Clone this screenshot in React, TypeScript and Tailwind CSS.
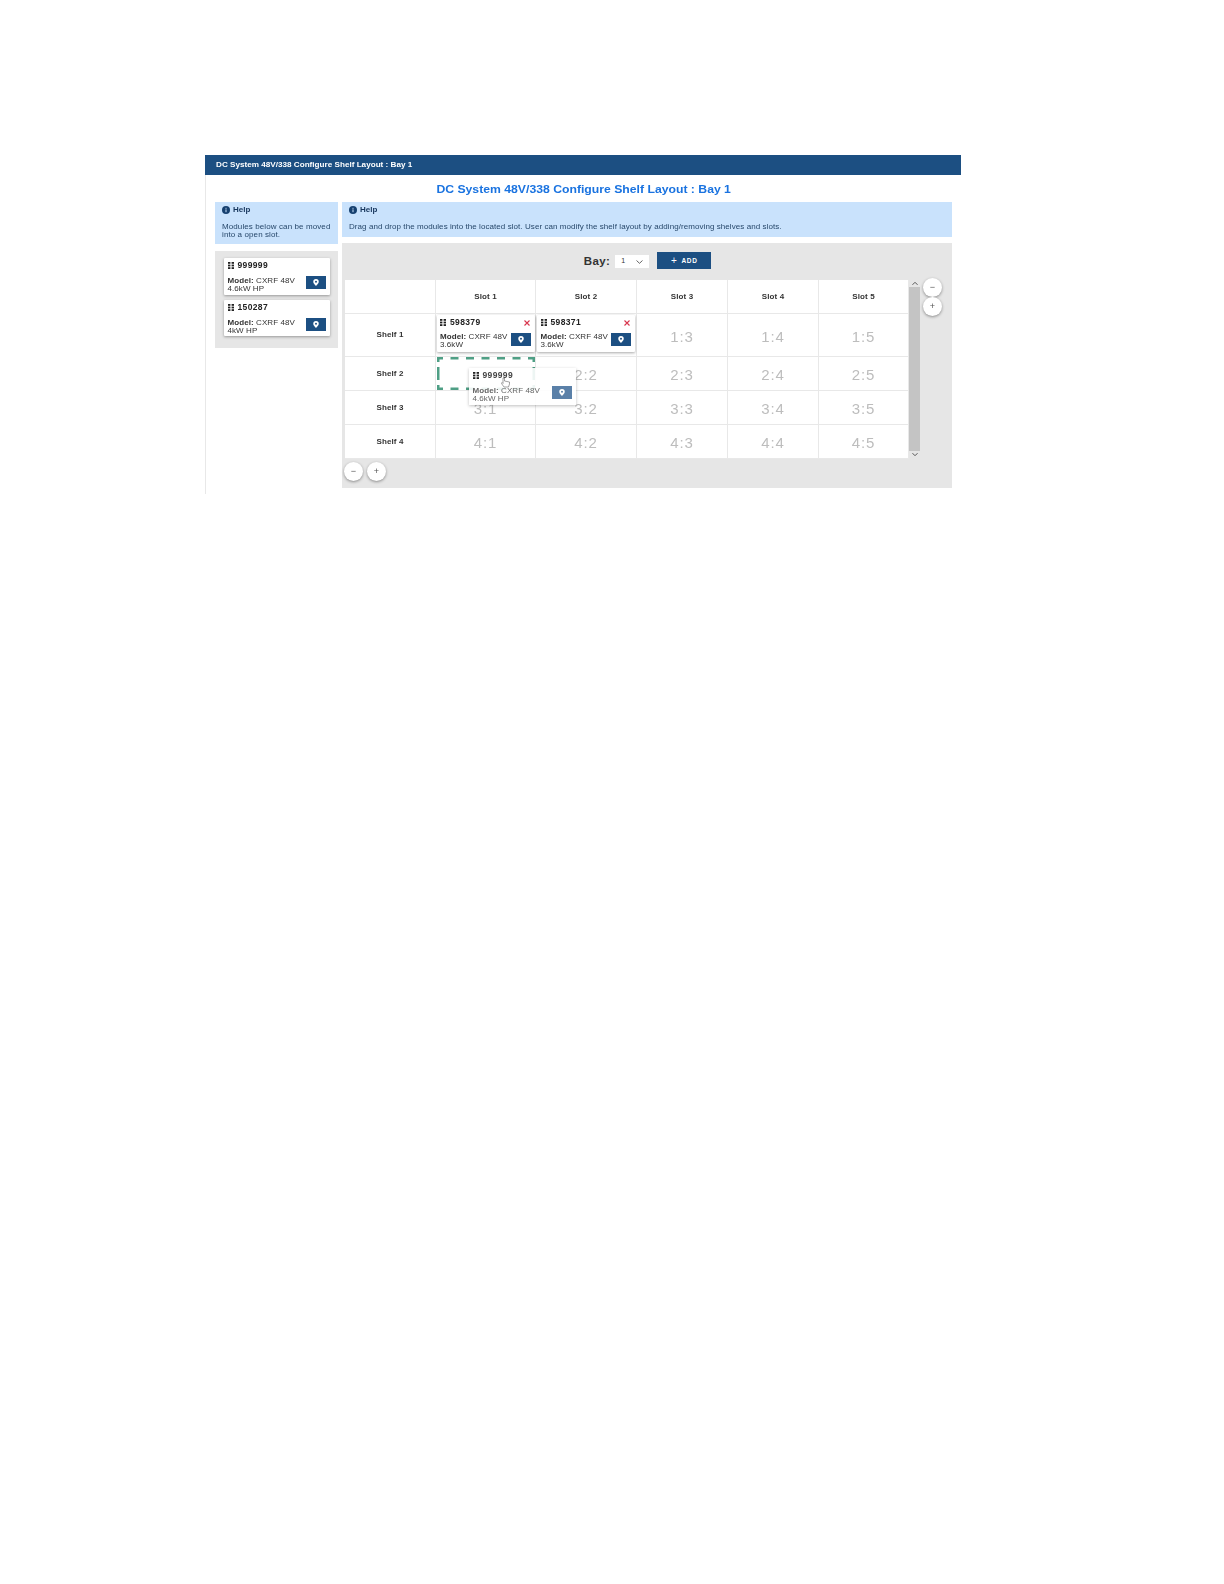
import React from "react";

const font = { fontFamily: '"Liberation Sans", Arial, sans-serif' };

function Grip() {
  return (
    <svg width="6" height="7" viewBox="0 0 6 7" className="shrink-0">
      {[0, 2.6, 5.2].map((y) => (
        <g key={y} fill="#222">
          <rect x="0" y={y} width="2.4" height="1.8" />
          <rect x="3.6" y={y} width="2.4" height="1.8" />
        </g>
      ))}
    </svg>
  );
}

function Pin() {
  return (
    <svg width="6" height="7" viewBox="0 0 12 14">
      <path d="M6 0a5.5 5.5 0 0 0-5.5 5.5C.5 9 6 14 6 14s5.5-5 5.5-8.500A5.500 5.500 0 0 0 6 0zm0 7.500a2 2 0 1 1 0-4 2 2 0 0 1 0 4z" fill="#fff" />
    </svg>
  );
}

function PinButton({ faded }: { faded?: boolean }) {
  return (
    <div className={`w-[20px] h-[13px] flex items-center justify-center shrink-0 ${faded ? "bg-[#5a80a8]" : "bg-[#1c4f82]"}`}>
      <Pin />
    </div>
  );
}

function CardBody({ id, model, close, faded }: { id: string; model: string; close?: boolean; faded?: boolean }) {
  return (
    <>
      <div className={`flex items-center h-[14px] gap-[4px] ${close ? "translate-y-[1px]" : ""}`}>
        <Grip />
        <span className={`text-[8.500px] tracking-[0.35px] font-bold leading-none ${faded ? "text-[#444]" : "text-[#222]"}`}>{id}</span>
        {close && (
          <svg width="6" height="6" viewBox="0 0 6 6" className="ml-auto mr-[1px]">
            <path d="M.5.500 5.500 5.500M5.500.500.500 5.500" stroke="#d8344c" strokeWidth="1.1" />
          </svg>
        )}
      </div>
      <div className="flex items-center justify-between h-[21px]">
        <div className={`text-[8px] leading-[7.700px] w-[72px] tracking-[0.08px] translate-y-[1.500px] ${faded ? "text-[#666]" : "text-[#333]"}`}>
          <b>Model:</b> {model}
        </div>
        <PinButton faded={faded} />
      </div>
    </>
  );
}

function ModuleCard({ id, model, close, className = "" }: { id: string; model: string; close?: boolean; className?: string }) {
  return (
    <div className={`bg-white shadow-[0_1px_3px_rgba(0,0,0,0.35)] rounded-[1px] pl-[3.500px] pr-[4px] ${className}`}>
      <CardBody id={id} model={model} close={close} />
    </div>
  );
}

function HelpTitle() {
  return (
    <div className="flex items-center gap-[3px] text-[8px] leading-[10px] font-bold text-[#16355c]">
      <svg width="8" height="8" viewBox="0 0 8 8">
        <circle cx="4" cy="4" r="4" fill="#16406f" />
        <rect x="3.500" y="3.400" width="1" height="2.800" fill="#c9e2fc" />
        <rect x="3.500" y="1.800" width="1" height="1" fill="#c9e2fc" />
      </svg>
      Help
    </div>
  );
}

function RoundBtn({ label }: { label: string }) {
  return (
    <div className="w-[19px] h-[19px] rounded-full bg-white shadow-[0_1px_3px_rgba(0,0,0,0.4)] flex items-center justify-center text-[9px] text-[#555] leading-none">
      {label}
    </div>
  );
}

const slotHeaders = ["Slot 1", "Slot 2", "Slot 3", "Slot 4", "Slot 5"];
const rowHeights = ["h-[43px]", "h-[34px]", "h-[34px]", "h-[34px]"];

function Cell({ children, className = "" }: { children?: React.ReactNode; className?: string }) {
  return (
    <div className={`bg-white border-r border-b border-[#e8e8e8] flex items-center justify-center ${className}`}>{children}</div>
  );
}

function Placeholder({ text }: { text: string }) {
  return <span className="text-[15px] text-[#bdbdbd] tracking-[0.8px] translate-y-[2px]">{text}</span>;
}

function DropZone() {
  const line = { fill: "none", stroke: "#4f9f85", strokeWidth: 2.5 };
  return (
    <svg width="98" height="33" viewBox="0 0 98 33" className="-mt-[1px]">
      <path d="M0 1.250H98" {...line} strokeDasharray="6 7.500 8 7.500 8 7.500 8 7.500 8 7.500 8 7.500 7" />
      <path d="M0 31.750H98" {...line} strokeDasharray="6 7.500 8 7.500 8 7.500 8 7.500 8 7.500 8 7.500 7" />
      <path d="M1.250 0V33" {...line} strokeDasharray="5 5 13 5 5" />
      <path d="M96.750 0V33" {...line} strokeDasharray="5 5 13 5 5" />
    </svg>
  );
}

export default function App() {
  return (
    <div style={font} className="relative w-[1224px] h-[1584px] bg-white overflow-hidden pt-[155px] pl-[205px]">
      <div className="w-[756px] h-[339px] border-l border-[#e8e8e8] blur-[0.4px]">
        <div className="h-[20px] bg-[#1c4f82] flex items-center pl-[11px] -ml-px">
          <span className="text-[7.500px] font-bold text-white origin-left scale-x-[1.085]">
            DC System 48V/338 Configure Shelf Layout : Bay 1
          </span>
        </div>
        <div className="h-[27px] pt-[1px] flex items-center justify-center">
          <span className="text-[11px] font-bold text-[#1a73e0] scale-x-[1.11]">
            DC System 48V/338 Configure Shelf Layout : Bay 1
          </span>
        </div>
        <div className="flex pl-[9px] gap-[4px]">
          {/* left column */}
          <div className="w-[123px] flex flex-col gap-[7px]">
            <div className="h-[42px] bg-[#c9e2fc] pl-[7px] pt-[3px] pr-[3px]">
              <HelpTitle />
              <div className="text-[8px] leading-[7.700px] text-[#27486b] mt-[8px] tracking-[0.1px]">
                Modules below can be moved into a open slot.
              </div>
            </div>
            <div className="h-[97px] bg-[#e6e6e6] pt-[7px] pl-[9px] flex flex-col gap-[5px]">
              <ModuleCard id="999999" model="CXRF 48V 4.6kW HP" className="h-[37px] w-[106px]" />
              <ModuleCard id="150287" model="CXRF 48V 4kW HP" className="h-[36px] w-[106px]" />
            </div>
          </div>
          {/* right column */}
          <div className="w-[610px] flex flex-col gap-[6px]">
            <div className="h-[35px] bg-[#c9e2fc] pl-[7px] pt-[3px]">
              <HelpTitle />
              <div className="text-[8px] leading-[7.700px] text-[#27486b] mt-[8px] tracking-[0.07px]">
                Drag and drop the modules into the located slot. User can modify the shelf layout by adding/removing shelves and slots.
              </div>
            </div>
            <div className="relative h-[245px] bg-[#e6e6e6] pt-[6px] pl-[3px]">
              <div className="h-[31px] pt-[3px] flex items-start justify-center pr-[2px]">
                <span className="text-[11.500px] font-bold text-[#333] tracking-[0.4px] leading-[18px] mr-[5px]">Bay:</span>
                <div className="w-[34px] h-[13px] mt-[3px] bg-white flex items-center justify-between px-[6px] text-[7px] text-[#333] mr-[8px]">
                  1
                  <svg width="7" height="4" viewBox="0 0 7 4">
                    <path d="M.5.500 3.500 3.300 6.500.500" fill="none" stroke="#555" strokeWidth="0.9" />
                  </svg>
                </div>
                <div className="w-[54px] h-[17px] bg-[#1c4f82] flex items-center justify-center gap-[4px] text-white text-[6.500px] font-bold tracking-[0.7px]">
                  <span className="text-[10px] font-normal leading-none">+</span>ADD
                </div>
              </div>
              <div className="flex items-start">
                <div className="relative grid grid-cols-[91px_100px_101px_91px_91px_90px] w-[564px]">
                  <Cell className="h-[34px]" />
                  {slotHeaders.map((s) => (
                    <Cell key={s} className="h-[34px]">
                      <span className="text-[8px] font-bold text-[#333] tracking-[0.1px]">{s}</span>
                    </Cell>
                  ))}
                  {rowHeights.map((h, r) => (
                    <React.Fragment key={r}>
                      <Cell className={h}>
                        <span className="text-[8px] font-bold text-[#333] tracking-[0.1px]">{`Shelf ${r + 1}`}</span>
                      </Cell>
                      {[0, 1, 2, 3, 4].map((c) => {
                        const isCard = r === 0 && c < 2;
                        const isDrop = r === 1 && c === 0;
                        return (
                          <Cell key={c} className={h}>
                            {isCard ? (
                              <ModuleCard
                                id={c === 0 ? "598379" : "598371"}
                                model="CXRF 48V 3.6kW"
                                close
                                className="w-[98px] h-[37px] -mt-[4px]"
                              />
                            ) : isDrop ? (
                              <DropZone />
                            ) : (
                              <Placeholder text={`${r + 1}:${c + 1}`} />
                            )}
                          </Cell>
                        );
                      })}
                    </React.Fragment>
                  ))}
                  {/* dragged ghost */}
                  <div className="absolute left-[124px] top-[88px] w-[107px] h-[37px] pl-[3.500px] pr-[4px] bg-white/90 shadow-[0_1px_3px_rgba(0,0,0,0.25)]">
                    <CardBody id="999999" model="CXRF 48V 4.6kW HP" faded />
                  </div>
                  {/* hand cursor */}
                  <svg className="absolute left-[156px] top-[97px]" width="9" height="11" viewBox="0 0 9 11">
                    <path d="M2 1v5.500L1 5.500 0.500 6.500 3 10h4.500L8.500 7V5L3.500 4V1z" fill="#fff" stroke="#666" strokeWidth="0.6" />
                  </svg>
                </div>
                {/* scrollbar */}
                <div className="w-[11px] h-[178px] flex flex-col items-center">
                  <svg width="8" height="7" viewBox="0 0 8 7" className="shrink-0">
                    <path d="M1.500 4.800 4 2.300 6.500 4.800" fill="none" stroke="#555" strokeWidth="1" />
                  </svg>
                  <div className="w-full flex-1 bg-[#c4c4c4]" />
                  <svg width="8" height="7" viewBox="0 0 8 7" className="shrink-0">
                    <path d="M1.500 2.200 4 4.700 6.500 2.200" fill="none" stroke="#555" strokeWidth="1" />
                  </svg>
                </div>
                <div className="ml-[3px] -mt-[2px] flex flex-col items-center">
                  <RoundBtn label="−" />
                  <RoundBtn label="+" />
                </div>
              </div>
              <div className="flex gap-[4px] -ml-[1px] pt-[3px]">
                <RoundBtn label="−" />
                <RoundBtn label="+" />
              </div>
            </div>
          </div>
        </div>
      </div>
    </div>
  );
}
